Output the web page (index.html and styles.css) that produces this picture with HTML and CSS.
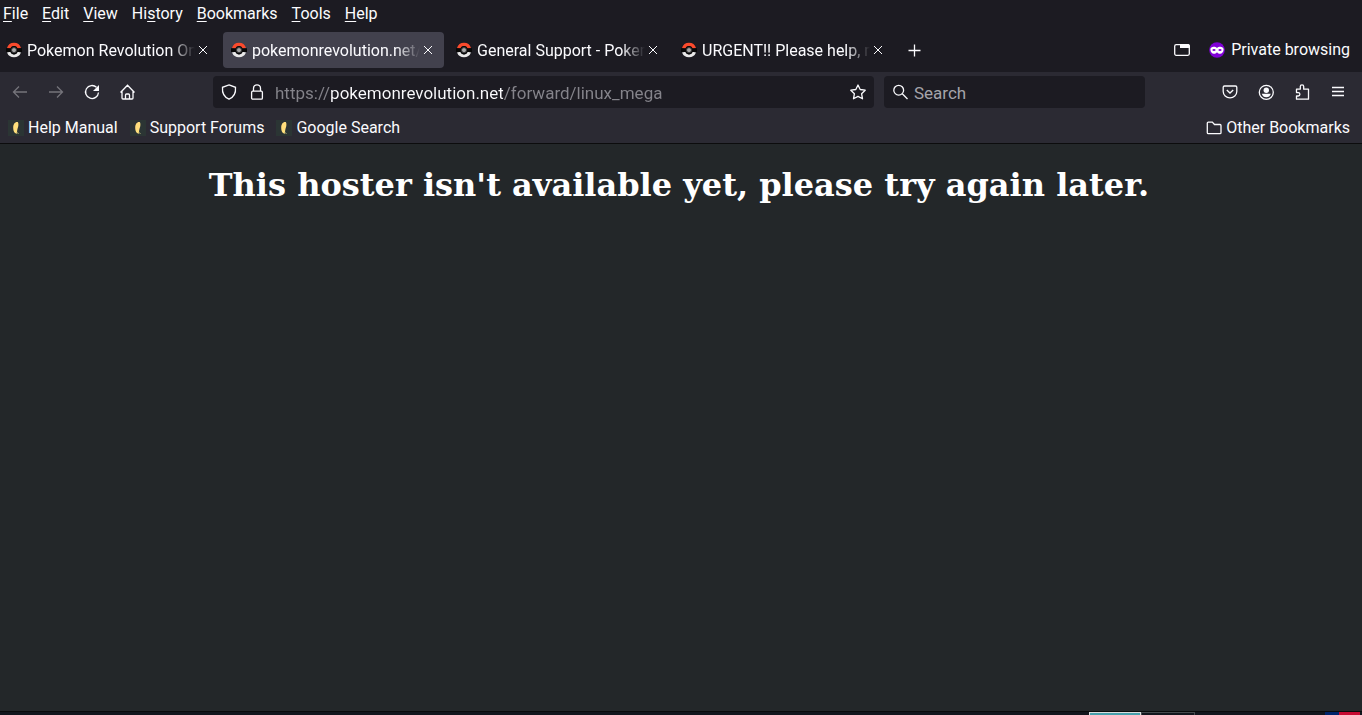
FILE: index.html
```html
<!DOCTYPE html>
<html lang="en">
<head>
<meta charset="utf-8">
<title>pokemonrevolution.net/forward/linux_mega</title>
<link rel="stylesheet" href="styles.css">
</head>
<body>
<svg class="defs" aria-hidden="true">
  <symbol id="ball" viewBox="0 0 16 16">
    <path d="M1 6A7.3 7.3 0 0 1 15 6L11.500 6.800A3.600 3.600 0 0 0 4.500 6.800Z" fill="#fb4a2c"/>
    <path d="M1 10.500A7.500 7.500 0 0 0 15 10.500L11.500 9.800A3.600 3.600 0 0 1 4.500 9.800Z" fill="#e8e8e8"/>
    <path d="M0 6.300L4.500 6.300A3.800 3.800 0 0 1 11.500 6.300L16 6.300V9.900L11.500 10.100A3.800 3.800 0 0 1 4.500 10.100L0 9.900Z" fill="#070707"/>
    <circle cx="8" cy="8.100" r="2.500" fill="#a9a9a9" stroke="#3b3b3d"/>
  </symbol>
  <symbol id="close" viewBox="0 0 16 16"><path d="M4 4l8 8M12 4l-8 8" fill="none" stroke="currentColor" stroke-width="1"/></symbol>
  <symbol id="leaf" viewBox="0 0 16 16">
    <path d="M0 0h16v16H0z" fill="#2b3534"/>
    <path d="M9.800 2C7 1.500 5.200 4 5.200 7.500C5.200 11 6.500 13.600 9.300 13.800C8.900 12 9 10.500 9.600 8.500C10.500 6 10.800 3.500 9.800 2Z" fill="#ffe07c"/>
    <path d="M8.700 12l2 2" stroke="#8e9065"/>
  </symbol>
</svg>
<header class="chrome">
  <nav class="menubar" aria-label="Menu">
    <button><u>F</u>ile</button><button><u>E</u>dit</button><button><u>V</u>iew</button><button>Hi<u>s</u>tory</button><button><u>B</u>ookmarks</button><button><u>T</u>ools</button><button><u>H</u>elp</button>
  </nav>
  <div class="tabbar">
    <div class="tab tab-first"><svg class="icon"><use href="#ball"/></svg><span class="tab-title">Pokemon Revolution Online</span><button class="tab-close" aria-label="Close tab"><svg class="icon"><use href="#close"/></svg></button></div>
    <div class="tab tab-active"><svg class="icon"><use href="#ball"/></svg><span class="tab-title">pokemonrevolution.net/forward</span><button class="tab-close" aria-label="Close tab"><svg class="icon"><use href="#close"/></svg></button></div>
    <div class="tab"><svg class="icon"><use href="#ball"/></svg><span class="tab-title">General Support - Pokemon</span><button class="tab-close" aria-label="Close tab"><svg class="icon"><use href="#close"/></svg></button></div>
    <div class="tab"><svg class="icon"><use href="#ball"/></svg><span class="tab-title">URGENT!! Please help, my</span><button class="tab-close" aria-label="Close tab"><svg class="icon"><use href="#close"/></svg></button></div>
    <button class="tool" aria-label="New tab"><svg class="icon line" viewBox="0 0 16 16"><path d="M8.500 2.500v12M2.500 8.500h12"/></svg></button>
    <div class="private">
      <button class="tool" aria-label="List all tabs"><svg class="icon line" viewBox="0 0 16 16"><rect x=".7" y="2.700" width="14.600" height="10.600" rx="1.500"/><path d="M6 2h8.500L16 3.500V6H6z" fill="currentColor" stroke="none"/></svg></button>
      <svg class="icon" viewBox="0 0 16 16"><circle cx="8" cy="8" r="7.800" fill="#8000d7"/><path d="M8 6C6.500 4 1.400 4 1.400 7.300C1.400 12.200 5.800 12.900 8 10.200C10.200 12.900 14.600 12.200 14.600 7.300C14.600 4 9.500 4 8 6Z" fill="#fff"/><ellipse cx="5" cy="8" rx="1.600" ry="1.100" fill="#8000d7"/><ellipse cx="11" cy="8" rx="1.600" ry="1.100" fill="#8000d7"/></svg>
      <span>Private browsing</span>
    </div>
  </div>
  <div class="navbar">
    <button class="tool" aria-label="Back" disabled><svg class="icon line" viewBox="0 0 16 16"><path d="M15 8H1.500M7 2.500L1.500 8L7 13.500"/></svg></button>
    <button class="tool" aria-label="Forward" disabled><svg class="icon line" viewBox="0 0 16 16"><path d="M1 8h13.500M9 2.500L14.500 8L9 13.500"/></svg></button>
    <button class="tool" aria-label="Reload"><svg class="icon line" viewBox="0 0 16 16"><path d="M12.500 3.300A6.500 6.500 0 1 0 14.500 8.500"/><path d="M15 1v6H9z" fill="currentColor" stroke="none"/></svg></button>
    <button class="tool" aria-label="Home"><svg class="icon line" viewBox="0 0 16 16"><path d="M.5 8.500L7.500 1.200L14.500 8.500M2 7V14q0 1 1 1h9q1 0 1-1V7M5.500 15v-4q0-1 1-1h2q1 0 1 1v4"/></svg></button>
    <span class="spring"></span>
    <div class="field urlbar">
      <button class="tool small" aria-label="Tracking protection"><svg class="icon line" viewBox="0 0 16 16"><path d="M8 .9L14.500 3.300C15 9 12.500 13.300 8 15.200C3.500 13.300 1 9 1.500 3.300Z"/></svg></button>
      <button class="tool small" aria-label="Site information"><svg class="icon line" viewBox="0 0 16 16"><rect x="2.600" y="7.200" width="10.800" height="8" rx="1.200"/><path d="M4.500 7V4.300a3.500 3.500 0 0 1 7 0V7"/></svg></button>
      <input class="url" type="text" aria-label="Address" value="https://pokemonrevolution.net/forward/linux_mega">
      <button class="tool" aria-label="Bookmark this page"><svg class="icon line" viewBox="0 0 16 16"><path d="M8 1L10.200 5.500L15.200 6.200L11.600 9.700L12.500 14.800L8 12.400L3.500 14.800L4.400 9.700L.8 6.200L5.800 5.500Z" stroke-linejoin="round"/></svg></button>
    </div>
    <div class="field searchbar">
      <svg class="icon line" viewBox="0 0 16 16"><circle cx="6.700" cy="6.200" r="4.900"/><path d="M10.300 9.800L15.500 15"/></svg>
      <input class="search" type="text" aria-label="Search" placeholder="Search">
    </div>
    <span class="spring"></span>
    <button class="tool" aria-label="Save to Pocket"><svg class="icon line" viewBox="0 0 16 16"><path d="M2.500 2h11q1.300 0 1.300 1.300V7.500a6.800 6.300 0 0 1-13.600 0V3.300Q1.200 2 2.500 2ZM4.800 6L8 9L11.200 6"/></svg></button>
    <button class="tool" aria-label="Account"><svg class="icon line" viewBox="0 0 16 16"><circle cx="8.300" cy="8.300" r="7"/><circle cx="8.300" cy="6.300" r="2.700" fill="currentColor" stroke="none"/><path d="M3.800 9.800h9Q11.800 13.300 8.300 13.300T3.800 9.800Z" fill="currentColor" stroke="none"/></svg></button>
    <button class="tool" aria-label="Extensions"><svg class="icon line" viewBox="0 0 16 16"><path d="M2.500 5.200H6.300V2.600A1.700 1.700 0 0 1 9.700 2.600V5.200H14.500V15.200H2.500V12H4.200A1.700 1.700 0 0 0 4.200 8.600H2.500Z" stroke-linejoin="round"/></svg></button>
    <button class="tool" aria-label="Application menu"><svg class="icon line" viewBox="0 0 16 16"><path d="M2 3.500h12M2 7.500h12M2 11.500h12"/></svg></button>
  </div>
  <nav class="bookmarks" aria-label="Bookmarks">
    <a href="#"><svg class="icon"><use href="#leaf"/></svg>Help Manual</a>
    <a href="#"><svg class="icon"><use href="#leaf"/></svg>Support Forums</a>
    <a href="#"><svg class="icon"><use href="#leaf"/></svg>Google Search</a>
    <button class="other"><svg class="icon line" viewBox="0 0 16 16"><path d="M2.300 2.100h4L8.500 4.500H14q1 0 1 1v7.200q0 1-1 1H2.300q-1 0-1-1V3.100q0-1 1-1Z"/></svg>Other Bookmarks</button>
  </nav>
</header>
<main class="page">
  <h1>This hoster isn't available yet, please try again later.</h1>
</main>
<footer class="panel">
  <span class="workspace workspace-current"></span><span class="workspace"></span><span class="flag"></span>
</footer>
</body>
</html>
```
FILE: styles.css
```css
* { box-sizing: border-box; }

body {
  margin: 0;
  min-height: 100vh;
  display: flex;
  flex-direction: column;
  background: #232729;
  color: #fbfbfe;
  font: 16px/20px Roboto, sans-serif;
}

button, input {
  margin: 0;
  padding: 0;
  border: 0;
  background: none;
  color: inherit;
  font: inherit;
}

input { outline: 0; min-width: 0; flex: 1; }

.defs { display: none; }
.icon { width: 16px; height: 16px; flex: none; display: block; }
.line { fill: none; stroke: currentColor; stroke-width: 1.3; }

.chrome { background: #2b2a33; border-bottom: 1px solid #0c0c0d; white-space: nowrap; }

.menubar {
  display: flex;
  gap: 14px;
  height: 28px;
  align-items: center;
  padding: 0 3px;
  background: #1c1b22;
}
.menubar u { text-underline-offset: 2px; text-decoration-thickness: 1px; }

.tabbar {
  display: flex;
  align-items: center;
  gap: 4px;
  height: 44px;
  padding-right: 12px;
  background: #1c1b22;
}
.tab {
  display: flex;
  align-items: center;
  width: 221px;
  height: 36px;
  padding: 0 8px;
  border-radius: 4px;
}
.tab-first { width: 219px; padding-left: 6px; }
.tab-active { background: #42414d; }
.tab-title {
  flex: 1;
  min-width: 0;
  margin-left: 5px;
  padding-top: 2px;
  overflow: hidden;
  -webkit-mask-image: linear-gradient(to left, transparent, #000 24px);
  mask-image: linear-gradient(to left, transparent, #000 24px);
}

.tool {
  width: 32px;
  height: 32px;
  display: flex;
  align-items: center;
  justify-content: center;
  flex: none;
}
.tool:disabled { color: #75747b; }
.small { width: 28px; }
.private { display: flex; align-items: center; margin-left: auto; }
.private .tool { margin-right: 11px; }
.private span { margin-left: 6px; }

.navbar {
  display: flex;
  align-items: center;
  gap: 4px;
  height: 40px;
  padding: 0 8px 0 4px;
}
.spring { flex: 61; }
.field {
  display: flex;
  align-items: center;
  height: 32px;
  border-radius: 4px;
  background: #1c1b22;
  font-size: 17px;
}
.urlbar { flex: 659; padding-left: 2px; }
.url {
  margin-left: 4px;
  padding-top: 1px;
  color: transparent;
  caret-color: #fbfbfe;
  background: linear-gradient(to right, #85848b 55px, #fbfbfe 55px, #fbfbfe 228px, #85848b 228px);
  -webkit-background-clip: text;
  background-clip: text;
}
.searchbar { flex: 245; margin-left: 6px; padding: 0 8px; gap: 6px; }
.search { padding-top: 1px; }
.search::placeholder { color: #a5a4aa; opacity: 1; }

.bookmarks {
  display: flex;
  align-items: center;
  gap: 12px;
  height: 31px;
  padding: 0 12px 0 8px;
}
.bookmarks a { display: flex; align-items: center; gap: 4px; color: inherit; text-decoration: none; }
.other { display: flex; align-items: center; gap: 4px; margin-left: auto; }

.page { flex: 1; padding: 1px 12px 0 8px; }
.page h1 {
  margin: 21px 0;
  color: #fff;
  font: bold 32px/38px "DejaVu Serif", serif;
  text-align: center;
}

.panel {
  display: flex;
  height: 4px;
  padding-left: calc(80% - 1px);
  border-top: 1px solid #090b0b;
  background: #12161d;
}
.workspace { width: 54px; border: 1px solid #454a4d; border-bottom: 0; }
.workspace-current { width: 52px; border-color: #d9dddd; background: #459fab; }
.flag { width: 35px; margin-left: auto; margin-right: 2px; background: linear-gradient(to right, #00246b 14px, #c60b32 14px); }
```
